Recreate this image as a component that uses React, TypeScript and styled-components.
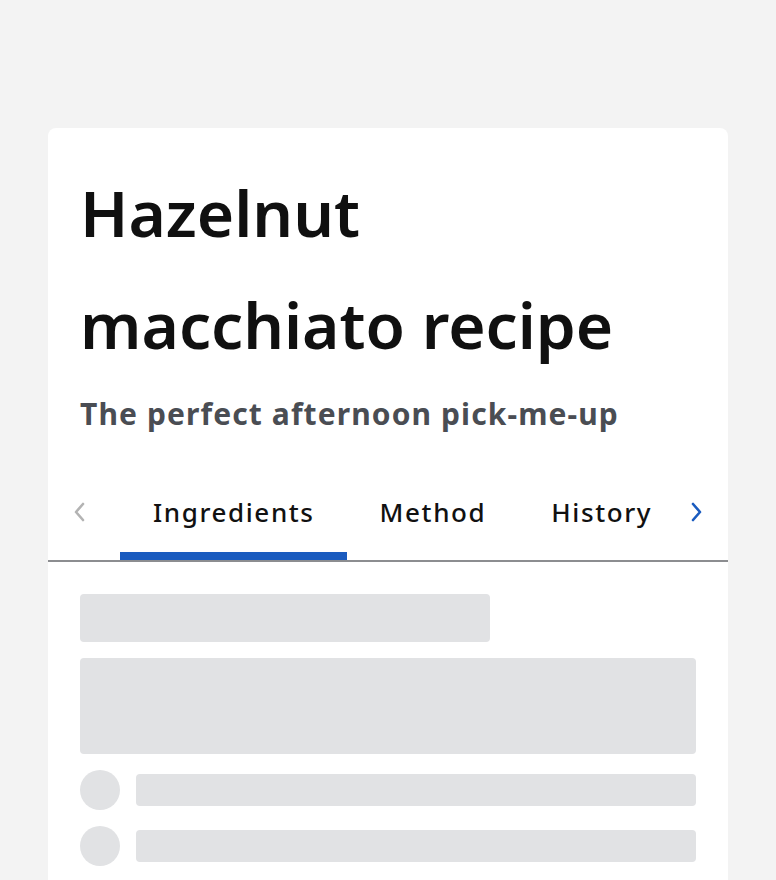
import React, { useState } from 'react';
import styled, { createGlobalStyle } from 'styled-components';

const GlobalStyle = createGlobalStyle`
  html, body {
    margin: 0;
    padding: 0;
    background: #f3f3f3;
    font-family: 'Noto Sans', 'Open Sans', sans-serif;
  }
`;

const tabs = ['Ingredients', 'Method', 'History'];

const Page = styled.div`
  padding: 128px 48px 0;
  min-height: 880px;
  box-sizing: border-box;
`;

const Card = styled.section`
  background: #fff;
  border-radius: 8px;
  padding: 29px 0 32px;
`;

const Header = styled.header`
  padding: 0 32px;
`;

const Title = styled.h1`
  margin: 0;
  font-size: 64px;
  line-height: 112px;
  font-weight: 600;
  color: #101010;
  max-width: 560px;
`;

const Subtitle = styled.p`
  margin: 12px 0 0;
  font-size: 30px;
  line-height: 42px;
  font-weight: 700;
  letter-spacing: 1.1px;
  color: #4a4d53;
`;

const TabBar = styled.div`
  margin-top: 37px;
  display: flex;
  align-items: stretch;
  border-bottom: 2px solid #8c8d90;
`;

const ScrollButton = styled.button<{ $active?: boolean }>`
  flex: 0 0 64px;
  display: flex;
  align-items: center;
  justify-content: center;
  padding: 0 0 8px;
  border: 0;
  background: #fff;
  color: ${(p) => (p.$active ? '#1a5bbf' : '#b3b3b3')};
  cursor: pointer;
`;

const TabList = styled.div`
  flex: 1;
  display: flex;
  overflow: hidden;
  margin-left: 8px;
`;

const Tab = styled.button<{ $selected?: boolean }>`
  flex: 0 0 auto;
  height: 88px;
  box-sizing: border-box;
  padding: 0 32px 0 33px;
  border: 0;
  border-bottom: 8px solid ${(p) => (p.$selected ? '#1a5bbf' : 'transparent')};
  background: none;
  font-family: 'Noto Sans', sans-serif;
  font-size: 26px;
  font-weight: 500;
  letter-spacing: 1.6px;
  color: #111;
  cursor: pointer;
`;

const Body = styled.div`
  padding: 32px 32px 0;
  display: flex;
  flex-direction: column;
  gap: 16px;
`;

const Bone = styled.div<{ $w?: string; $h: number }>`
  width: ${(p) => p.$w || '100%'};
  height: ${(p) => p.$h}px;
  border-radius: 4px;
  background: #e1e2e4;
`;

const Row = styled.div`
  display: flex;
  align-items: center;
  gap: 16px;
`;

const Dot = styled.div`
  flex: 0 0 40px;
  height: 40px;
  border-radius: 50%;
  background: #e1e2e4;
`;

const Chevron = ({ dir }: { dir: 'left' | 'right' }) => (
  <svg width="14" height="20" viewBox="0 0 14 20" fill="none">
    <polyline
      points={dir === 'left' ? '10,2 3,10 10,18' : '4,2 11,10 4,18'}
      stroke="currentColor"
      strokeWidth="2.6"
      strokeLinecap="round"
      strokeLinejoin="round"
    />
  </svg>
);

export default function App(): JSX.Element {
  const [current, setCurrent] = useState(0);

  return (
    <>
      <GlobalStyle />
      <Page>
        <Card>
          <Header>
            <Title>Hazelnut macchiato recipe</Title>
            <Subtitle>The perfect afternoon pick-me-up</Subtitle>
          </Header>
          <TabBar>
            <ScrollButton aria-label="Previous">
              <Chevron dir="left" />
            </ScrollButton>
            <TabList>
              {tabs.map((t, i) => (
                <Tab key={t} $selected={i === current} onClick={() => setCurrent(i)}>
                  {t}
                </Tab>
              ))}
            </TabList>
            <ScrollButton $active aria-label="Next">
              <Chevron dir="right" />
            </ScrollButton>
          </TabBar>
          <Body>
            <Bone $w="410px" $h={48} />
            <Bone $h={96} />
            <Row>
              <Dot />
              <Bone $h={32} />
            </Row>
            <Row>
              <Dot />
              <Bone $h={32} />
            </Row>
          </Body>
        </Card>
      </Page>
    </>
  );
}
